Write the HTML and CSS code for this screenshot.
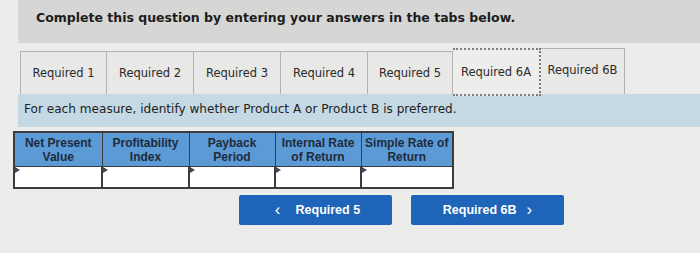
FILE: index.html
```html
<!DOCTYPE html>
<html lang="en">
<head>
    <meta charset="UTF-8">
    <title>Required 6A</title>
    <link rel="stylesheet" href="styles.css">
</head>
<body>
    <div class="topbar">Complete this question by entering your answers in the tabs below.</div>

    <div class="tabs">
        <a class="tab" href="javascript:;">Required 1</a>
        <a class="tab" href="javascript:;">Required 2</a>
        <a class="tab" href="javascript:;">Required 3</a>
        <a class="tab" href="javascript:;">Required 4</a>
        <a class="tab tab-prev" href="javascript:;">Required 5</a>
        <a class="tab tab-active" href="javascript:;">Required 6A</a>
        <a class="tab tab-next" href="javascript:;">Required 6B</a>
    </div>

    <div class="info">For each measure, identify whether Product A or Product B is preferred.</div>

    <table class="answers">
        <tr>
            <th class="c1">Net Present<br>Value</th>
            <th class="c2">Profitability<br>Index</th>
            <th class="c3">Payback<br>Period</th>
            <th class="c4">Internal Rate<br>of Return</th>
            <th class="c5">Simple Rate of<br>Return</th>
        </tr>
        <tr>
            <td><span class="marker"></span></td>
            <td><span class="marker"></span></td>
            <td><span class="marker"></span></td>
            <td><span class="marker"></span></td>
            <td><span class="marker"></span></td>
        </tr>
    </table>

    <div class="nav">
        <a class="btn btn-back" href="javascript:;"><span class="arrow">&lsaquo;</span> Required 5</a>
        <a class="btn" href="javascript:;">Required 6B <span class="arrow">&rsaquo;</span></a>
    </div>
</body>
</html>
```

FILE: styles.css
```css
*{
    margin: 0;
    padding: 0;
    box-sizing: border-box;
}
body{
    background: #ececea;
    font-family: "DejaVu Sans", Verdana, sans-serif;
    color: #222;
    width: 700px;
    height: 253px;
    overflow: hidden;
}
.topbar{
    margin-left: 18px;
    height: 43px;
    background: #d6d6d4;
    padding: 10px 0 0 18px;
    font-size: 12.5px;
    font-weight: bold;
    color: #1c1c1c;
}
.tabs{
    display: flex;
    align-items: flex-end;
    margin: 4px 0 0 20px;
    height: 47px;
}
.tab{
    display: flex;
    align-items: center;
    justify-content: center;
    width: 87px;
    height: 43px;
    border: 1px solid #b2b2b0;
    border-bottom: none;
    background: #e8e8e6;
    color: #2a2a2a;
    font-size: 11.5px;
    text-decoration: none;
}
.tab + .tab{
    border-left: none;
}
.tab-prev{
    width: 85px;
}
.tab-active{
    width: 88px;
    height: 48px;
    margin-bottom: -2px;
    border: 2px dotted #7a7a7a;
    background: #ededeb;
}
.tab-active + .tab{
    border-left: none;
}
.tab-next{
    width: 84px;
    height: 46px;
    padding-bottom: 4px;
}
.info{
    margin-left: 18px;
    height: 33px;
    background: #c5d9e4;
    padding: 8px 0 0 6px;
    font-size: 12.1px;
    color: #222;
}
.answers{
    margin: 4px 0 0 13px;
    border-collapse: collapse;
    border: 2px solid #3c3c3c;
    font-family: "Liberation Sans", Arial, sans-serif;
}
.answers th{
    height: 34px;
    background: #5c9ad6;
    border: 1px solid #3c3c3c;
    color: #1e2b3c;
    font-size: 12px;
    line-height: 14px;
    font-weight: bold;
    text-align: center;
    vertical-align: top;
    padding-top: 3px;
}
.c1{ width: 88px; }
.c2{ width: 87px; }
.c3{ width: 86px; }
.c4{ width: 86px; }
.c5{ width: 92px; }
.answers td{
    height: 22px;
    background: #fff;
    border: 2px solid #3c3c3c;
    border-top-width: 1px;
    vertical-align: top;
    padding: 0;
}
.marker{
    display: block;
    width: 0;
    height: 0;
    border-top: 3px solid transparent;
    border-bottom: 3px solid transparent;
    border-left: 5px solid #3c4a5c;
}
.nav{
    display: flex;
    gap: 19px;
    margin: 6px 0 0 239px;
}
.btn{
    display: flex;
    align-items: center;
    justify-content: center;
    gap: 10px;
    width: 153px;
    height: 30px;
    background: #1e64b8;
    border-radius: 2px;
    color: #fff;
    font-family: "Liberation Sans", Arial, sans-serif;
    font-size: 12.5px;
    font-weight: bold;
    text-decoration: none;
}
.btn-back{
    gap: 15px;
    padding-left: 4px;
}
.arrow{
    font-size: 17px;
    font-weight: normal;
    line-height: 1;
    margin-top: -2px;
}
```
